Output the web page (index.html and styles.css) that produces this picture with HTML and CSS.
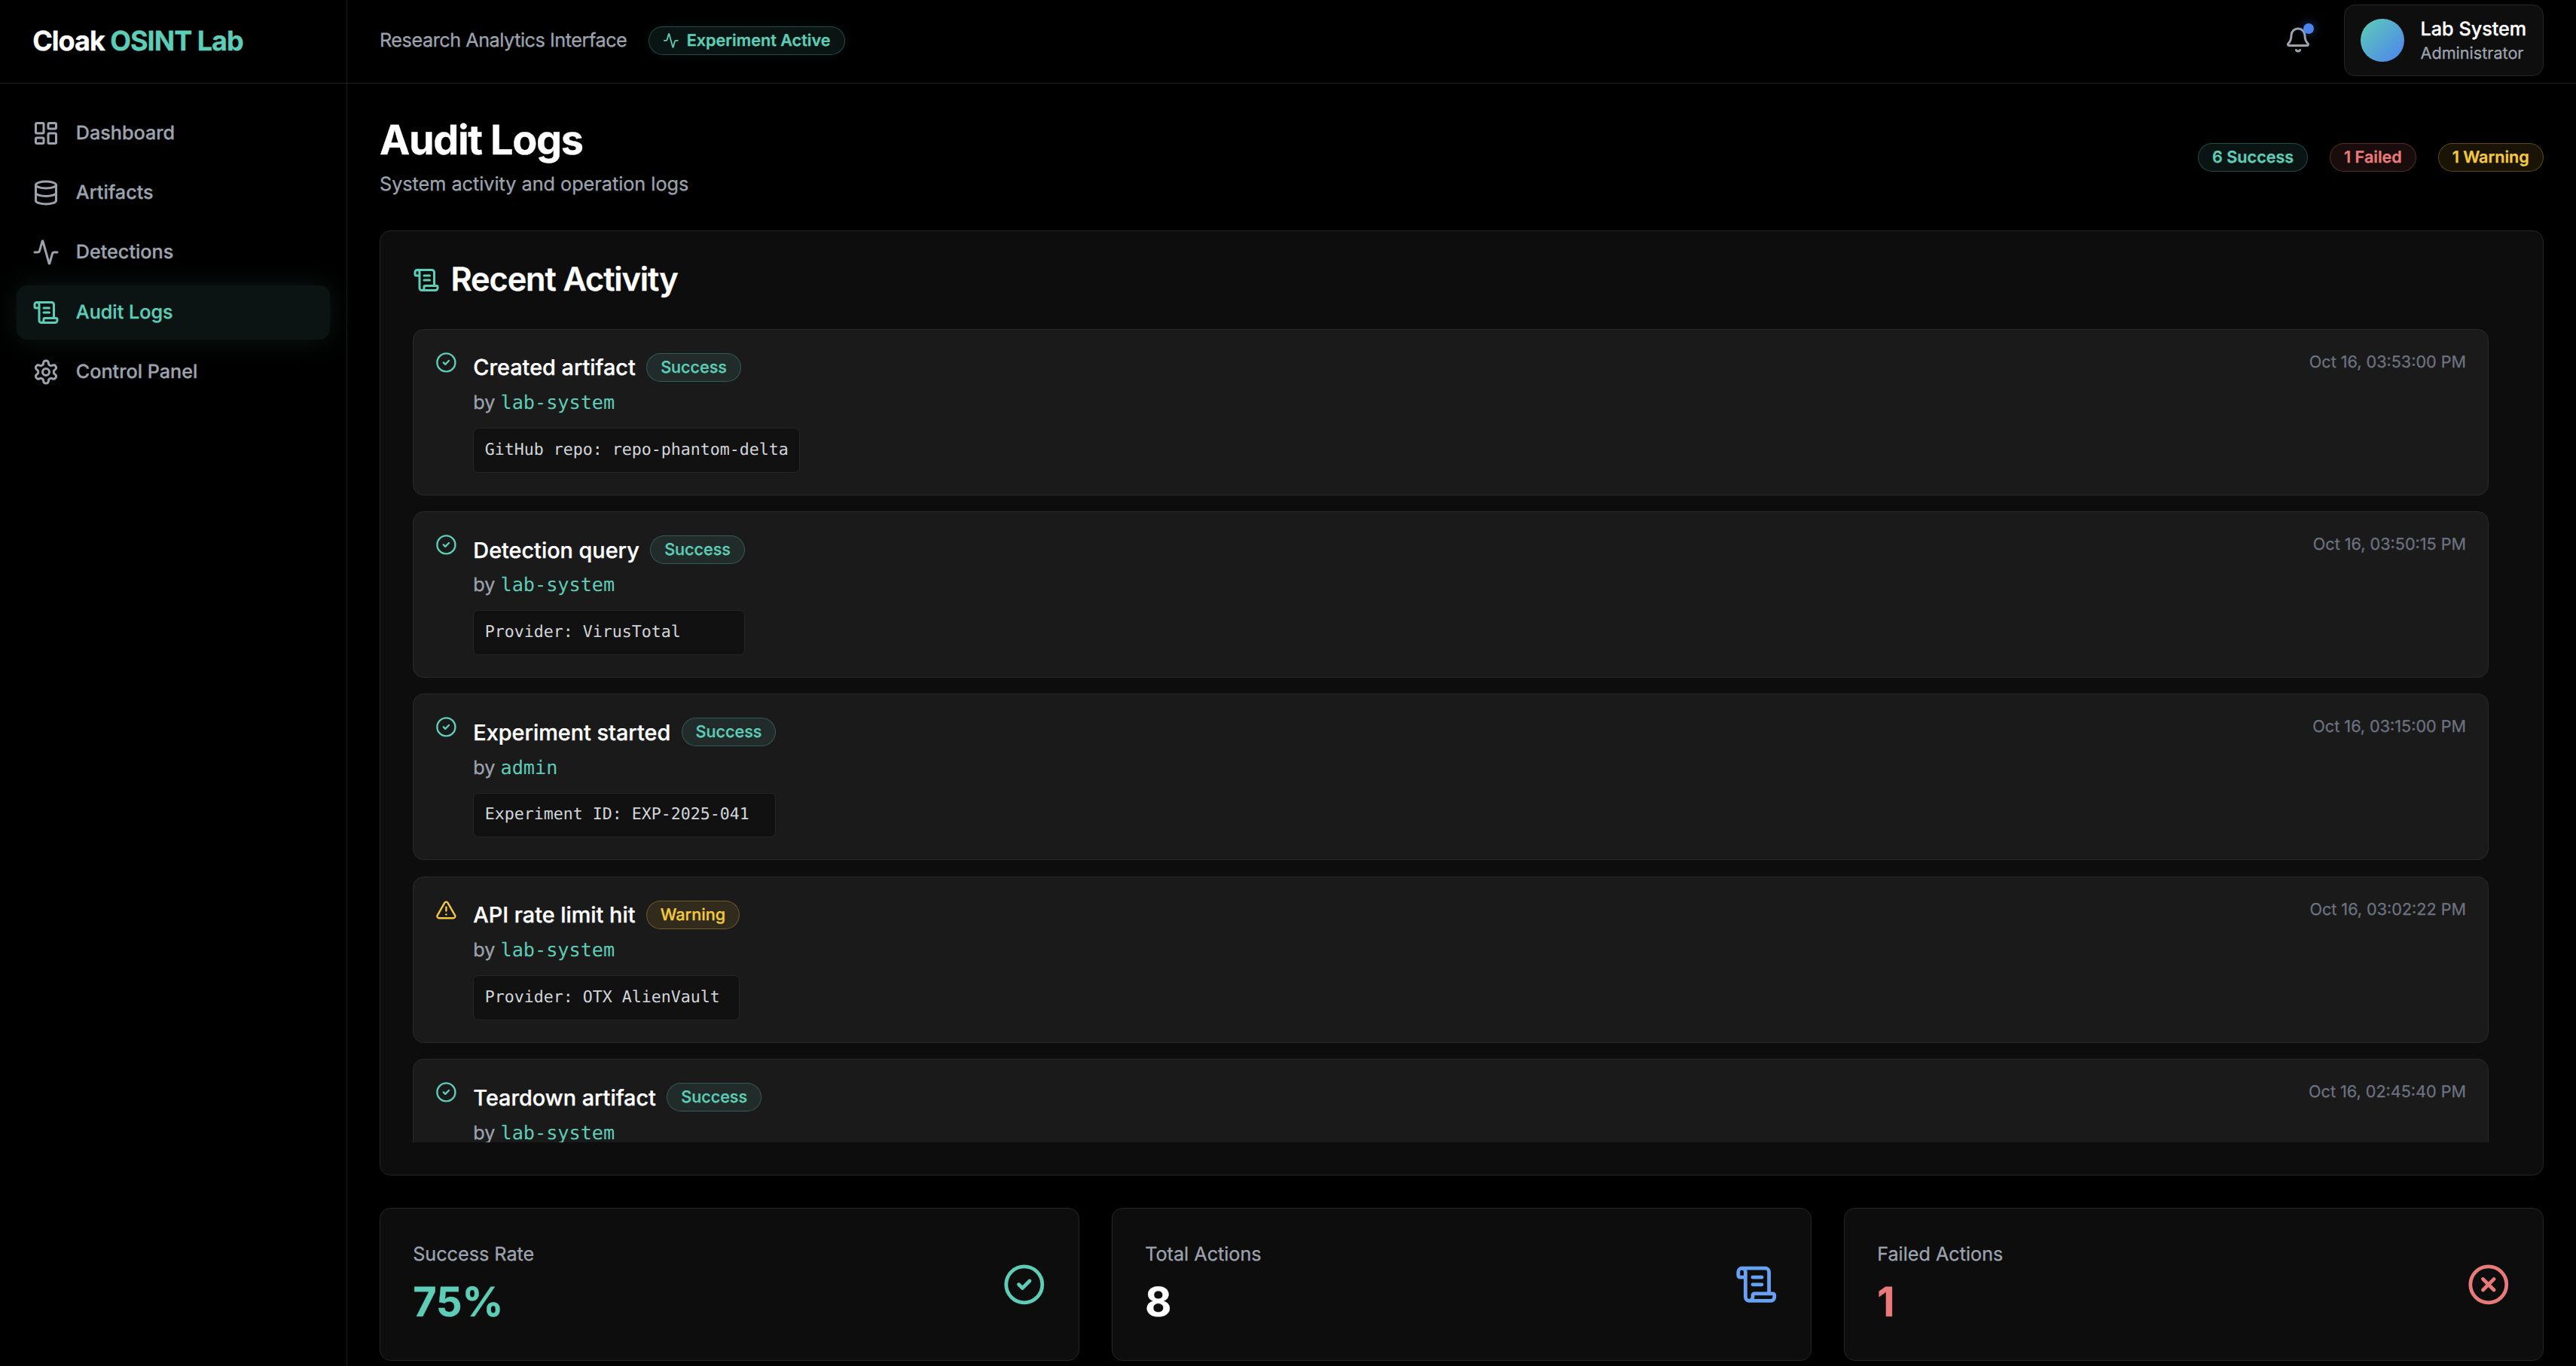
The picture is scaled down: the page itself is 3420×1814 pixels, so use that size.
FILE: index.html
```html
<!DOCTYPE html>
<html>
<head>
  <title>Cloak OSINT Lab - Audit Logs</title>
  <link rel="stylesheet" href="styles.css">
</head>
<body>
  <aside class="sidebar">
    <div class="logo"><span>Cloak <span class="accent">OSINT Lab</span></span></div>
    <nav class="nav">
      <a class="nav-item">
        <svg class="icon-nav" viewBox="0 0 24 24"><rect x="3" y="3" width="7" height="9" rx="1"/><rect x="14" y="3" width="7" height="5" rx="1"/><rect x="14" y="12" width="7" height="9" rx="1"/><rect x="3" y="16" width="7" height="5" rx="1"/></svg>
        Dashboard
      </a>
      <a class="nav-item">
        <svg class="icon-nav" viewBox="0 0 24 24"><ellipse cx="12" cy="5" rx="9" ry="3"/><path d="M3 5V19A9 3 0 0 0 21 19V5"/><path d="M3 12A9 3 0 0 0 21 12"/></svg>
        Artifacts
      </a>
      <a class="nav-item">
        <svg class="icon-nav" viewBox="0 0 24 24"><path d="M22 12h-2.48a2 2 0 0 0-1.93 1.46l-2.35 8.36a.25.25 0 0 1-.48 0L9.24 2.18a.25.25 0 0 0-.48 0l-2.35 8.36A2 2 0 0 1 4.49 12H2"/></svg>
        Detections
      </a>
      <a class="nav-item active">
        <svg class="icon-nav" viewBox="0 0 24 24"><path d="M15 12h-5"/><path d="M15 8h-5"/><path d="M19 17V5a2 2 0 0 0-2-2H4"/><path d="M8 21h12a2 2 0 0 0 2-2v-1a1 1 0 0 0-1-1H11a1 1 0 0 0-1 1v1a2 2 0 1 1-4 0V5a2 2 0 1 0-4 0v2a1 1 0 0 0 1 1h3"/></svg>
        Audit Logs
      </a>
      <a class="nav-item">
        <svg class="icon-nav" viewBox="0 0 24 24"><path d="M12.22 2h-.44a2 2 0 0 0-2 2v.18a2 2 0 0 1-1 1.73l-.43.25a2 2 0 0 1-2 0l-.15-.08a2 2 0 0 0-2.73.73l-.22.38a2 2 0 0 0 .73 2.73l.15.1a2 2 0 0 1 1 1.72v.51a2 2 0 0 1-1 1.74l-.15.09a2 2 0 0 0-.73 2.73l.22.38a2 2 0 0 0 2.73.73l.15-.08a2 2 0 0 1 2 0l.43.25a2 2 0 0 1 1 1.73V20a2 2 0 0 0 2 2h.44a2 2 0 0 0 2-2v-.18a2 2 0 0 1 1-1.73l.43-.25a2 2 0 0 1 2 0l.15.08a2 2 0 0 0 2.73-.73l.22-.39a2 2 0 0 0-.73-2.73l-.15-.08a2 2 0 0 1-1-1.74v-.5a2 2 0 0 1 1-1.74l.15-.09a2 2 0 0 0 .73-2.73l-.22-.38a2 2 0 0 0-2.73-.73l-.15.08a2 2 0 0 1-2 0l-.43-.25a2 2 0 0 1-1-1.73V4a2 2 0 0 0-2-2z"/><circle cx="12" cy="12" r="3"/></svg>
        Control Panel
      </a>
    </nav>
  </aside>

  <div class="page">
    <header class="topbar">
      <div class="topbar-left">
        <span class="topbar-title">Research Analytics Interface</span>
        <span class="pill pill-active">
          <svg class="icon-pill" viewBox="0 0 24 24"><path d="M22 12h-2.48a2 2 0 0 0-1.93 1.46l-2.35 8.36a.25.25 0 0 1-.48 0L9.24 2.18a.25.25 0 0 0-.48 0l-2.35 8.36A2 2 0 0 1 4.49 12H2"/></svg>
          Experiment Active
        </span>
      </div>
      <div class="topbar-right">
        <div class="bell">
          <svg class="icon-nav" viewBox="0 0 24 24"><path d="M10.268 21a2 2 0 0 0 3.464 0"/><path d="M3.262 15.326A1 1 0 0 0 4 17h16a1 1 0 0 0 .74-1.673C19.41 13.956 18 12.499 18 8A6 6 0 0 0 6 8c0 4.499-1.411 5.956-2.738 7.326"/></svg>
          <span class="bell-dot"></span>
        </div>
        <div class="user-card">
          <div class="avatar"></div>
          <div>
            <div class="user-name">Lab System</div>
            <div class="user-role">Administrator</div>
          </div>
        </div>
      </div>
    </header>

    <main class="main">
      <div class="page-head">
        <div>
          <h1>Audit Logs</h1>
          <p class="subtitle">System activity and operation logs</p>
        </div>
        <div class="summary">
          <span class="pill pill-success">6 Success</span>
          <span class="pill pill-failed">1 Failed</span>
          <span class="pill pill-warning">1 Warning</span>
        </div>
      </div>

      <section class="panel">
        <h2>
          <svg class="icon-nav accent" viewBox="0 0 24 24"><path d="M15 12h-5"/><path d="M15 8h-5"/><path d="M19 17V5a2 2 0 0 0-2-2H4"/><path d="M8 21h12a2 2 0 0 0 2-2v-1a1 1 0 0 0-1-1H11a1 1 0 0 0-1 1v1a2 2 0 1 1-4 0V5a2 2 0 1 0-4 0v2a1 1 0 0 0 1 1h3"/></svg>
          Recent Activity
        </h2>
        <div class="log-list">
          <div class="log-row">
            <svg class="icon-status accent" viewBox="0 0 24 24"><circle cx="12" cy="12" r="10"/><path d="m9 12 2 2 4-4"/></svg>
            <div class="log-body">
              <div class="log-title">Created artifact <span class="pill pill-success">Success</span></div>
              <div class="log-by">by <span class="log-user">lab-system</span></div>
              <div class="log-detail">GitHub repo: repo-phantom-delta</div>
            </div>
            <div class="log-time">Oct 16, 03:53:00 PM</div>
          </div>
          <div class="log-row">
            <svg class="icon-status accent" viewBox="0 0 24 24"><circle cx="12" cy="12" r="10"/><path d="m9 12 2 2 4-4"/></svg>
            <div class="log-body">
              <div class="log-title">Detection query <span class="pill pill-success">Success</span></div>
              <div class="log-by">by <span class="log-user">lab-system</span></div>
              <div class="log-detail">Provider: VirusTotal</div>
            </div>
            <div class="log-time">Oct 16, 03:50:15 PM</div>
          </div>
          <div class="log-row">
            <svg class="icon-status accent" viewBox="0 0 24 24"><circle cx="12" cy="12" r="10"/><path d="m9 12 2 2 4-4"/></svg>
            <div class="log-body">
              <div class="log-title">Experiment started <span class="pill pill-success">Success</span></div>
              <div class="log-by">by <span class="log-user">admin</span></div>
              <div class="log-detail">Experiment ID: EXP-2025-041</div>
            </div>
            <div class="log-time">Oct 16, 03:15:00 PM</div>
          </div>
          <div class="log-row">
            <svg class="icon-status warning" viewBox="0 0 24 24"><path d="m21.73 18-8-14a2 2 0 0 0-3.48 0l-8 14A2 2 0 0 0 4 21h16a2 2 0 0 0 1.73-3"/><path d="M12 9v4"/><path d="M12 17h.01"/></svg>
            <div class="log-body">
              <div class="log-title">API rate limit hit <span class="pill pill-warning">Warning</span></div>
              <div class="log-by">by <span class="log-user">lab-system</span></div>
              <div class="log-detail">Provider: OTX AlienVault</div>
            </div>
            <div class="log-time">Oct 16, 03:02:22 PM</div>
          </div>
          <div class="log-row">
            <svg class="icon-status accent" viewBox="0 0 24 24"><circle cx="12" cy="12" r="10"/><path d="m9 12 2 2 4-4"/></svg>
            <div class="log-body">
              <div class="log-title">Teardown artifact <span class="pill pill-success">Success</span></div>
              <div class="log-by">by <span class="log-user">lab-system</span></div>
            </div>
            <div class="log-time">Oct 16, 02:45:40 PM</div>
          </div>
        </div>
      </section>

      <div class="stats">
        <div class="stat-card">
          <div>
            <div class="stat-label">Success Rate</div>
            <div class="stat-value accent">75%</div>
          </div>
          <svg class="icon-stat accent" viewBox="0 0 24 24"><circle cx="12" cy="12" r="10"/><path d="m9 12 2 2 4-4"/></svg>
        </div>
        <div class="stat-card">
          <div>
            <div class="stat-label">Total Actions</div>
            <div class="stat-value white">8</div>
          </div>
          <svg class="icon-stat blue" viewBox="0 0 24 24"><path d="M15 12h-5"/><path d="M15 8h-5"/><path d="M19 17V5a2 2 0 0 0-2-2H4"/><path d="M8 21h12a2 2 0 0 0 2-2v-1a1 1 0 0 0-1-1H11a1 1 0 0 0-1 1v1a2 2 0 1 1-4 0V5a2 2 0 1 0-4 0v2a1 1 0 0 0 1 1h3"/></svg>
        </div>
        <div class="stat-card">
          <div>
            <div class="stat-label">Failed Actions</div>
            <div class="stat-value failed">1</div>
          </div>
          <svg class="icon-stat failed" viewBox="0 0 24 24"><circle cx="12" cy="12" r="10"/><path d="m15 9-6 6"/><path d="m9 9 6 6"/></svg>
        </div>
      </div>
    </main>
  </div>
</body>
</html>
```

FILE: styles.css
```css
* {
  box-sizing: border-box;
}

html, body {
  margin: 0;
  height: 100%;
}

body {
  display: flex;
  overflow: hidden;
  background: #000;
  color: #fff;
  font-family: 'Inter', 'Liberation Sans', sans-serif;
  text-rendering: geometricPrecision;
  -webkit-text-stroke: 0.3px;
}

svg {
  fill: none;
  stroke: currentColor;
  stroke-width: 2;
  stroke-linecap: round;
  stroke-linejoin: round;
  flex-shrink: 0;
}

.accent { color: #5ecdb8; }
.warning { color: #f4c93e; }
.failed { color: #e97a7a; }
.blue { color: #66a1f2; }
.white { color: #fff; }

/* Sidebar */
.sidebar {
  width: 460.8px;
  flex-shrink: 0;
  border-right: 1px solid #1a1a1a;
}

.logo {
  height: 111px;
  padding: 0 43.2px 3px;
  display: flex;
  align-items: center;
  font-size: 36px;
  font-weight: 700;
  letter-spacing: -1px;
  border-bottom: 1px solid #1f1f1f;
}

.nav {
  padding: 30px 21.6px;
  display: flex;
  flex-direction: column;
  gap: 7.2px;
}

.nav-item {
  height: 72px;
  padding: 0 21.6px;
  display: flex;
  align-items: center;
  gap: 21.6px;
  border-radius: 14.4px;
  font-size: 25.2px;
  font-weight: 500;
  color: #9ca3af;
}

.nav-item.active {
  color: #5ecdb8;
  background: #0b1413;
  box-shadow: 0 0 36px rgba(94, 205, 184, 0.12);
}

.icon-nav {
  width: 36px;
  height: 36px;
}

/* Top bar */
.page {
  flex: 1;
  min-width: 0;
  display: flex;
  flex-direction: column;
}

.topbar {
  height: 111px;
  flex-shrink: 0;
  padding: 0 43.2px 3px;
  display: flex;
  align-items: center;
  justify-content: space-between;
  border-bottom: 1px solid #1f1f1f;
}

.topbar-left, .topbar-right {
  display: flex;
  align-items: center;
  gap: 28.8px;
}

.topbar-title {
  font-size: 25.2px;
  letter-spacing: -0.45px;
  color: #9ca3af;
}

.pill {
  display: inline-flex;
  align-items: center;
  height: 38px;
  padding: 0 18px;
  border: 1px solid;
  border-radius: 19px;
  font-size: 21.6px;
  font-weight: 500;
}

.summary .pill, .pill-active {
  font-weight: 600;
}

.pill-active, .pill-success {
  color: #5ecdb8;
  background: rgba(94, 205, 184, 0.1);
  border-color: rgba(94, 205, 184, 0.3);
}

.pill-warning {
  color: #f4c93e;
  background: rgba(244, 201, 62, 0.1);
  border-color: rgba(244, 201, 62, 0.3);
}

.pill-failed {
  color: #e97a7a;
  background: rgba(233, 122, 122, 0.1);
  border-color: rgba(233, 122, 122, 0.3);
}

.pill-active {
  gap: 10px;
  box-shadow: 0 0 14px rgba(94, 205, 184, 0.08);
}

.icon-pill {
  width: 21.6px;
  height: 21.6px;
}

.bell {
  position: relative;
  padding: 14.4px;
  color: #9ca3af;
  display: flex;
}

.bell-dot {
  position: absolute;
  top: 10px;
  right: 11px;
  width: 14.4px;
  height: 14.4px;
  border-radius: 50%;
  background: #4d83ee;
  box-shadow: 0 0 14px rgba(77, 131, 238, 0.5);
}

.user-card {
  display: flex;
  align-items: center;
  gap: 21.6px;
  padding: 14.4px 21.6px;
  background: #0e0e0e;
  border: 1px solid #262626;
  border-radius: 14.4px;
}

.avatar {
  width: 57.6px;
  height: 57.6px;
  border-radius: 50%;
  background: linear-gradient(135deg, #5ecdb8, #4d83ee);
}

.user-name {
  font-size: 25.2px;
  line-height: 36px;
  font-weight: 500;
}

.user-role {
  font-size: 21.6px;
  line-height: 28.8px;
  color: #9ca3af;
}

/* Main content */
.main {
  padding: 44px 43.2px 0;
}

.page-head {
  display: flex;
  align-items: center;
  justify-content: space-between;
  margin-bottom: 43.2px;
}

h1 {
  margin: 0 0 7.2px;
  font-size: 54px;
  line-height: 64.8px;
  font-weight: 700;
  letter-spacing: -1.35px;
}

.subtitle {
  margin: 0;
  font-size: 25.2px;
  line-height: 36px;
  color: #9ca3af;
}

.summary {
  display: flex;
  gap: 28.8px;
}

.panel {
  padding: 43.2px;
  padding-right: 72px;
  background: #0d0d0d;
  border: 1px solid #262626;
  border-radius: 14.4px;
  margin-bottom: 43.2px;
}

h2 {
  margin: 0 0 43.2px;
  display: flex;
  align-items: center;
  gap: 14.4px;
  font-size: 43.2px;
  line-height: 43.2px;
  font-weight: 600;
  letter-spacing: -1.08px;
}

h2 svg {
  color: #5ecdb8;
}

.log-list {
  height: 1080px;
  overflow: hidden;
  display: flex;
  flex-direction: column;
  gap: 21.6px;
}

.log-row {
  flex-shrink: 0;
  display: flex;
  align-items: flex-start;
  gap: 21.6px;
  padding: 28.8px;
  background: #1a1a1a;
  border: 1px solid #2a2a2a;
  border-radius: 14.4px;
}

.icon-status {
  width: 28.8px;
  height: 28.8px;
}

.log-body {
  display: flex;
  flex-direction: column;
}

.log-title {
  display: flex;
  align-items: center;
  gap: 14.4px;
  height: 42.4px;
  font-size: 28.8px;
  font-weight: 500;
  white-space: nowrap;
}

.log-by {
  margin-top: 8.2px;
  font-size: 25.2px;
  line-height: 36px;
  color: #9ca3af;
}

.log-user {
  font-family: 'DejaVu Sans Mono', 'Liberation Mono', monospace;
  color: #5ecdb8;
  -webkit-text-stroke: 0;
}

.log-detail {
  margin-top: 15px;
  padding: 14.4px;
  background: #111;
  border: 1px solid #262626;
  border-radius: 7.2px;
  font-family: 'DejaVu Sans Mono', 'Liberation Mono', monospace;
  font-size: 21.6px;
  line-height: 28.8px;
  color: #d1d5db;
  white-space: nowrap;
  -webkit-text-stroke: 0;
}

.log-time {
  margin-left: auto;
  font-size: 21.6px;
  line-height: 28.8px;
  color: #6b7280;
}

/* Stat cards */
.stats {
  display: grid;
  grid-template-columns: repeat(3, 1fr);
  gap: 43.2px;
}

.stat-card {
  display: flex;
  align-items: center;
  justify-content: space-between;
  padding: 43.2px;
  background: #0d0d0d;
  border: 1px solid #262626;
  border-radius: 14.4px;
}

.stat-label {
  font-size: 25.2px;
  line-height: 36px;
  color: #9ca3af;
}

.stat-value {
  margin-top: 13.6px;
  font-size: 54px;
  line-height: 64.8px;
  font-weight: 700;
}

.icon-stat {
  width: 57.6px;
  height: 57.6px;
}
```
